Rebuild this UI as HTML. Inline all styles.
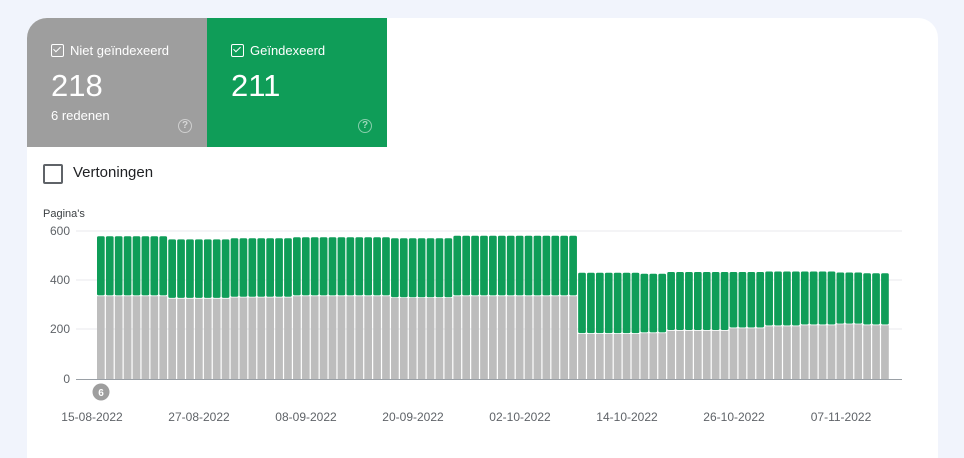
<!DOCTYPE html>
<html><head><meta charset="utf-8"><style>
body{margin:0;width:964px;height:448px;background:#f1f4fc;font-family:"Liberation Sans",sans-serif;overflow:hidden;position:relative}
.card{position:absolute;left:27px;top:18px;width:911px;height:440px;background:#fff;border-radius:20px 20px 0 0;overflow:hidden}
.tile{position:absolute;top:0;width:180px;height:129px;color:#fff}
.cb{position:absolute;left:24px;top:26px;width:11px;height:11px;border:1.3px solid #fff;border-radius:2px}
.cb:after{content:"";position:absolute;left:3px;top:0px;width:3px;height:6px;border:solid #fff;border-width:0 1.5px 1.5px 0;transform:rotate(45deg)}
.lbl{position:absolute;left:43px;top:25px;font-size:13px}
.num{position:absolute;left:24px;top:50px;font-size:31px}
.sub{position:absolute;left:24px;top:90px;font-size:13px}
.q{position:absolute;left:151px;top:101px;width:12px;height:12px;border:1.5px solid rgba(255,255,255,.5);border-radius:50%;font-size:10px;line-height:12px;text-align:center;color:rgba(255,255,255,.6);font-weight:bold}
</style></head><body>
<div class="card">
<div class="tile" style="left:0;background:#9e9e9e"><div class="cb"></div><div class="lbl">Niet geïndexeerd</div><div class="num">218</div><div class="sub">6 redenen</div><div class="q">?</div></div>
<div class="tile" style="left:180px;background:#0f9d58"><div class="cb"></div><div class="lbl">Geïndexeerd</div><div class="num">211</div><div class="q">?</div></div>
<div style="position:absolute;left:16px;top:146px;width:16px;height:16px;border:2px solid #5f6368;border-radius:2px"></div>
<div style="position:absolute;left:46px;top:146px;font-size:15px;color:#202124">Vertoningen</div>
</div>
<svg id="c" width="964" height="448" style="position:absolute;left:0;top:0" font-family="Liberation Sans, sans-serif">
<text x="43" y="217" font-size="11" fill="#3c4043">Pagina's</text>
<g font-size="12" fill="#5f6368" text-anchor="end">
<text x="70" y="235">600</text><text x="70" y="284">400</text><text x="70" y="333">200</text><text x="70" y="383">0</text></g>
<g stroke="#e8eaed"><line x1="76" x2="902" y1="231" y2="231"/><line x1="76" x2="902" y1="280" y2="280"/><line x1="76" x2="902" y1="329" y2="329"/></g>
<g id="bars"></g>
<line x1="76" x2="902" y1="379.5" y2="379.5" stroke="#9aa0a6"/>
<circle cx="101" cy="392" r="8.5" fill="#9e9e9e"/><text x="101" y="396" font-size="10" fill="#fff" text-anchor="middle" font-weight="bold">6</text>
<g font-size="12" fill="#5f6368" text-anchor="middle">
<text x="92" y="421">15-08-2022</text><text x="199" y="421">27-08-2022</text><text x="306" y="421">08-09-2022</text><text x="413" y="421">20-09-2022</text><text x="520" y="421">02-10-2022</text><text x="627" y="421">14-10-2022</text><text x="734" y="421">26-10-2022</text><text x="841" y="421">07-11-2022</text></g>
</svg>
<script>
var g=[[8,580,340],[7,567,330],[7,572,335],[11,576,340],[7,572,333],[14,582,340],[7,432,187],[3,428,190],[7,435,200],[4,435,210],[4,437,218],[4,437,222],[3,433,226],[3,430,222]];
var s="",i=0,w=793/89,k=0.2467,b=379.3;
g.forEach(function(a){for(var j=0;j<a[0];j++){var x=97+i*w;var ty=b-a[1]*k,gy=b-a[2]*k;
s+='<rect x="'+x.toFixed(2)+'" y="'+ty.toFixed(1)+'" width="'+(w-1.2).toFixed(2)+'" height="'+(gy-ty).toFixed(1)+'" rx="1.5" fill="#0f9d58"/>';
s+='<rect x="'+x.toFixed(2)+'" y="'+(gy+0.8).toFixed(1)+'" width="'+(w-1.2).toFixed(2)+'" height="'+(b-gy-0.8).toFixed(1)+'" fill="#bdbdbd"/>';i++;}});
document.getElementById("bars").innerHTML=s;
</script>
</body></html>
